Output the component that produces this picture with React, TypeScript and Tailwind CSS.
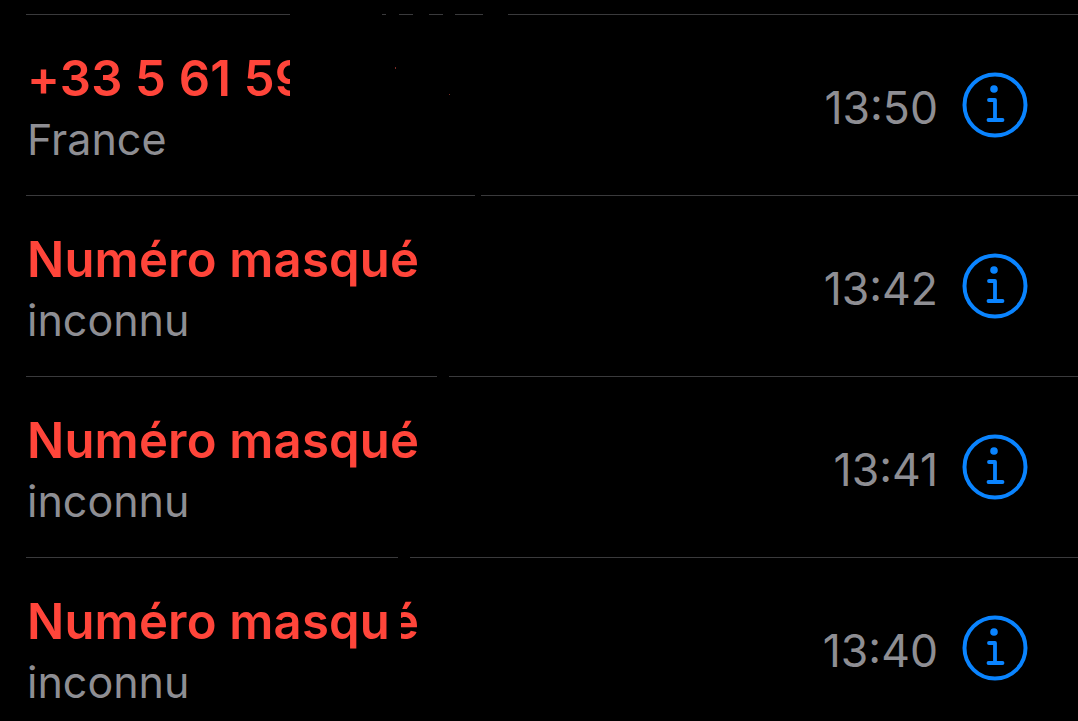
import React from "react";

// black patches that sit over the separators and the text
const rows = [
  {
    title: "+33 5 61 59",
    sub: "France",
    time: "13:50",
    clip: "w-[263px]",
    gaps: [
      "top-[-1px] h-[1px] left-[264px] w-[92px]",
      "top-[-1px] h-[1px] left-[360px] w-[13px]",
      "top-[-1px] h-[1px] left-[387px] w-[16px]",
      "top-[-1px] h-[1px] left-[417px] w-[12px]",
      "top-[-1px] h-[1px] left-[457px] w-[25px]",
    ],
  },
  { title: "Numéro masqué", sub: "inconnu", time: "13:42", clip: "w-[390px]", gaps: ["top-[-1px] h-[1px] left-[449px] w-[6px]"] },
  { title: "Numéro masqué", sub: "inconnu", time: "13:41", clip: "w-[390px]", gaps: ["top-[-1px] h-[1px] left-[411px] w-[12px]"] },
  {
    title: "Numéro masqué",
    sub: "inconnu",
    time: "13:40",
    clip: "w-[390px]",
    gaps: ["top-[-1px] h-[1px] left-[372px] w-[12px]", "top-[30px] h-[60px] left-[366px] w-[9px]"],
  },
];

const InfoIcon = () => (
  <svg width="66" height="66" viewBox="0 0 66 66" fill="none" className="shrink-0">
    <circle cx="33" cy="33" r="30.5" stroke="#0a84ff" strokeWidth="4" />
    <circle cx="32" cy="17" r="3.8" fill="#0a84ff" />
    <path d="M27 28h6v20M26.500 48h14" stroke="#0a84ff" strokeWidth="3.8" strokeLinecap="round" strokeLinejoin="round" />
  </svg>
);

export default function App() {
  return (
    <div className="w-[1078px] h-[721px] overflow-hidden bg-black pt-[14px] font-['Inter',sans-serif]">
      {rows.map((r, i) => (
        <div key={r.time} className="ml-[26px] h-[181px] border-t border-[#3a3a3c] flex items-center pr-[50px] relative">
          {r.gaps.map((g) => (
            <div key={g} className={`absolute bg-black ${g}`} />
          ))}
          {i === 0 && (
            <>
              <div className="absolute left-[369px] top-[52px] w-[1px] h-[2px] bg-[#7a2a25]" />
              <div className="absolute left-[423px] top-[79px] w-[1px] h-[1px] bg-[#7a2a25]" />
            </>
          )}
          <div className="flex flex-col pl-[1px] pt-[8px]">
            <div className={`${r.clip} overflow-hidden whitespace-nowrap text-[49px] leading-[60px] font-semibold tracking-[0.2px] text-[#ff453a]`}>
              {r.title}
            </div>
            <div className="text-[43px] leading-[60px] text-[#8e8e93]">{r.sub}</div>
          </div>
          <div className="ml-auto flex items-center gap-[24px]">
            <span className="text-[44.5px] leading-none pt-[7px] text-[#8e8e93]">{r.time}</span>
            <InfoIcon />
          </div>
        </div>
      ))}
    </div>
  );
}
